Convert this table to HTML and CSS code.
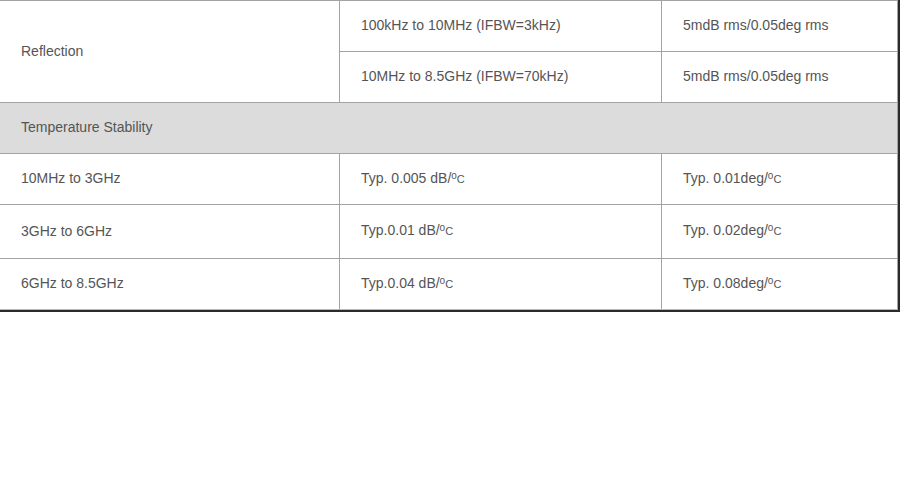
FILE: index.html
```html
<!DOCTYPE html>
<html>
<head>
<meta charset="utf-8">
<link rel="stylesheet" href="styles.css">
</head>
<body>
<div class="frame">
<table class="spec">
  <colgroup>
    <col class="c1">
    <col class="c2">
    <col class="c3">
  </colgroup>
  <tr class="r51">
    <td rowspan="2">Reflection</td>
    <td>100kHz to 10MHz (IFBW=3kHz)</td>
    <td>5mdB rms/0.05deg rms</td>
  </tr>
  <tr class="r51">
    <td>10MHz to 8.5GHz (IFBW=70kHz)</td>
    <td>5mdB rms/0.05deg rms</td>
  </tr>
  <tr class="r51 section">
    <td colspan="3">Temperature Stability</td>
  </tr>
  <tr class="r51">
    <td>10MHz to 3GHz</td>
    <td>Typ. 0.005 dB/<span class="unit"><sup>o</sup>C</span></td>
    <td>Typ. 0.01deg/<span class="unit"><sup>o</sup>C</span></td>
  </tr>
  <tr class="r55">
    <td>3GHz to 6GHz</td>
    <td>Typ.0.01 dB/<span class="unit"><sup>o</sup>C</span></td>
    <td>Typ. 0.02deg/<span class="unit"><sup>o</sup>C</span></td>
  </tr>
  <tr class="r51">
    <td>6GHz to 8.5GHz</td>
    <td>Typ.0.04 dB/<span class="unit"><sup>o</sup>C</span></td>
    <td>Typ. 0.08deg/<span class="unit"><sup>o</sup>C</span></td>
  </tr>
</table>
</div>
</body>
</html>
```
FILE: styles.css
```css
html, body {
  margin: 0;
  padding: 0;
  background: #fff;
}
.frame {
  width: 898px;
  border-right: 2px solid #2b2b2b;
  border-bottom: 2px solid #2b2b2b;
  overflow: hidden;
}
.spec {
  border-collapse: collapse;
  width: 899px;
  margin-left: -1px;
  table-layout: fixed;
  font-family: "Liberation Sans", Arial, sans-serif;
  font-size: 14px;
  color: #555;
}
.c1 { width: 340px; }
.c2 { width: 322px; }
.c3 { width: auto; }
.spec td {
  border: 1px solid #a3a3a3;
  padding: 0 0 2px 21px;
  vertical-align: middle;
  line-height: 16px;
}
.spec tr:last-child td {
  border-bottom: 1px solid #b8b8b8;
}
.r51 td { height: 48px; }
.r55 td { height: 51px; }
.section td {
  background: #dcdcdc;
}
.unit {
  font-size: 11px;
}
.unit sup {
  font-size: 10px;
  vertical-align: 4px;
  line-height: 0;
}
```
